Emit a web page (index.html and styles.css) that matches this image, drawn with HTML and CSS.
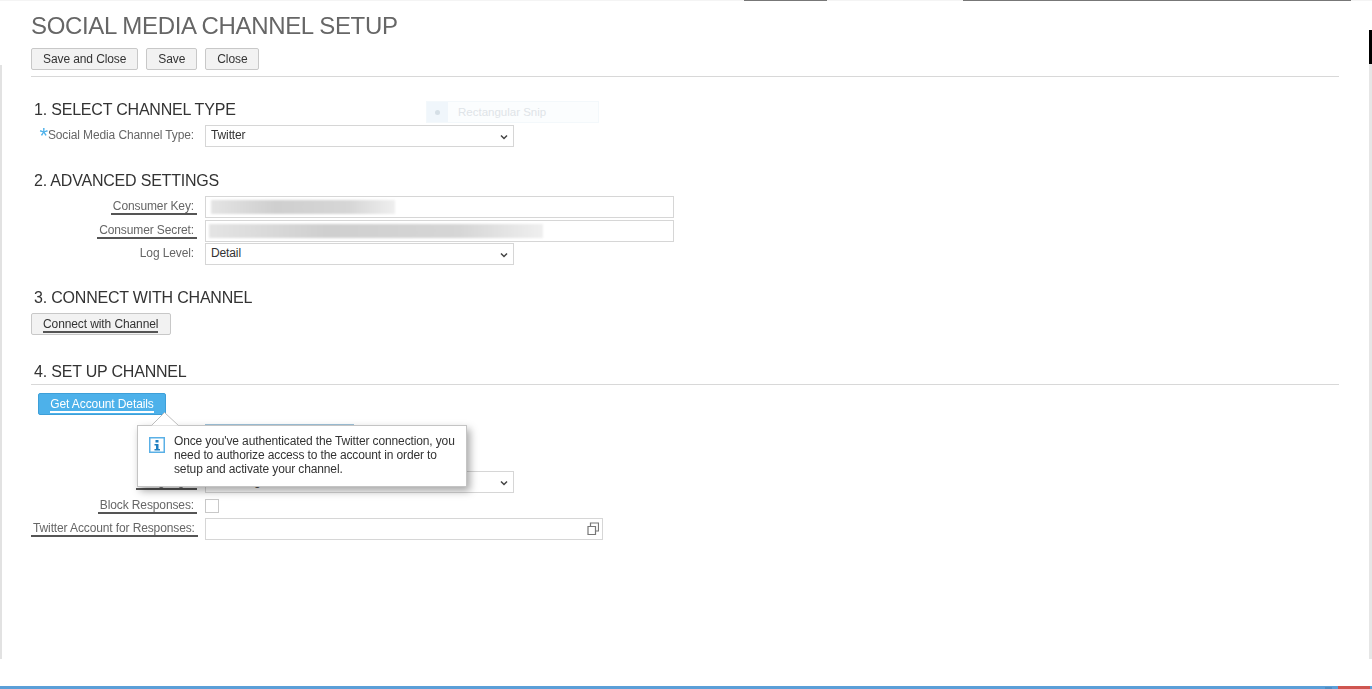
FILE: index.html
```html
<!DOCTYPE html>
<html lang="en">
<head>
<meta charset="utf-8">
<title>Social Media Channel Setup</title>
<link rel="stylesheet" href="styles.css">
</head>
<body>
<div class="topline"><span class="seg seg-a"></span><span class="seg seg-b"></span></div>
<div class="edge-left"></div>
<div class="edge-right"></div>
<div class="snip"><span class="snip-icon"><i></i></span><span class="snip-text">Rectangular Snip</span></div>
<main class="page">
  <h1 class="title">SOCIAL MEDIA CHANNEL SETUP</h1>
  <div class="toolbar">
    <button class="btn">Save and Close</button>
    <button class="btn">Save</button>
    <button class="btn">Close</button>
  </div>

  <section class="sec sec-1">
    <h2 class="heading">1. SELECT CHANNEL TYPE</h2>
    <div class="row">
      <label class="lbl"><span class="req">*</span>Social Media Channel Type:</label>
      <div class="select">Twitter<svg class="chev" viewBox="0 0 8 6"><path d="M1 1.500 4 4.500 7 1.500"/></svg></div>
    </div>
  </section>

  <section class="sec sec-2">
    <h2 class="heading">2. ADVANCED SETTINGS</h2>
    <div class="rows rows-2">
      <div class="row">
        <label class="lbl"><span class="ul ul-pad">Consumer Key:</span></label>
        <div class="input wide"><span class="smear smear-key"></span></div>
      </div>
      <div class="row">
        <label class="lbl"><span class="ul ul-pad">Consumer Secret:</span></label>
        <div class="input wide"><span class="smear smear-secret"></span></div>
      </div>
      <div class="row">
        <label class="lbl">Log Level:</label>
        <div class="select">Detail<svg class="chev" viewBox="0 0 8 6"><path d="M1 1.500 4 4.500 7 1.500"/></svg></div>
      </div>
    </div>
  </section>

  <section class="sec sec-3">
    <h2 class="heading">3. CONNECT WITH CHANNEL</h2>
    <button class="btn btn-connect"><span class="ul">Connect with Channel</span></button>
  </section>

  <section class="sec sec-4">
    <h2 class="heading heading-rule">4. SET UP CHANNEL</h2>
    <button class="btn btn-primary"><span class="ul ul-white">Get Account Details</span></button>
    <div class="rows rows-4">
      <div class="row row-peek">
        <label class="lbl"></label>
        <div class="input hidden-input"></div>
      </div>
      <div class="row">
        <label class="lbl"></label>
        <div class="input hidden-plain"></div>
      </div>
      <div class="row">
        <label class="lbl"><span class="ul ul-pad">Language:</span></label>
        <div class="select">Not Assigned<svg class="chev" viewBox="0 0 8 6"><path d="M1 1.500 4 4.500 7 1.500"/></svg></div>
      </div>
      <div class="row row-check">
        <label class="lbl"><span class="ul ul-pad">Block Responses:</span></label>
        <span class="check"></span>
      </div>
      <div class="row">
        <label class="lbl"><span class="ul ul-pad">Twitter Account for Responses:</span></label>
        <div class="input lookup">
          <svg class="lookup-icon" viewBox="0 0 12 13"><path d="M1 4.500h7.500v8h-7.500zM3.500 4.500v-3.500h8v8h-3"/></svg>
        </div>
      </div>
    </div>

    <div class="popover">
      <svg class="pop-arrow" viewBox="0 0 28 14"><path d="M.5 13.500 13.500 .5 27.500 13.500"/></svg>
      <svg class="info" viewBox="0 0 16 16"><rect x=".75" y=".75" width="14.500" height="14.500"/><path class="info-i" d="M6.500 3h3v2.500h-3zM5.500 7h4v5h1.500v1.500h-5.500v-1.500h1.500v-3.500h-1.500z"/></svg>
      <p class="pop-text">Once you've authenticated the Twitter connection, you need to authorize access to the account in order to setup and activate your channel.</p>
    </div>
  </section>
</main>
<div class="taskbar"><span class="task-bump"></span><span class="task-red"></span></div>
</body>
</html>
```
FILE: styles.css
```css
* { box-sizing: border-box; }
html, body { margin: 0; height: 100%; }
body {
  position: relative;
  height: 689px;
  overflow: hidden;
  background: #fff;
  font-family: "Liberation Sans", Arial, sans-serif;
  font-size: 12px;
  letter-spacing: -.12px;
  color: #333;
}
.page { padding: 0 33px 0 31px; filter: blur(.35px); }
.title {
  margin: 0;
  padding-top: 12px;
  height: 48px;
  font-size: 24px;
  letter-spacing: -.35px;
  line-height: 28px;
  font-weight: 400;
  color: #666;
}
.toolbar {
  display: flex;
  gap: 8px;
  height: 29px;
  border-bottom: 1px solid #d8d8d8;
}
.btn {
  height: 22px;
  padding: 0 11px;
  border: 1px solid #c8c8c8;
  border-radius: 2px;
  background: #f2f2f2;
  font: 12px/18px "Liberation Sans", Arial, sans-serif;
  letter-spacing: -.1px;
  color: #333;
}
.btn-connect { padding-right: 12px; }
.heading {
  margin: 0;
  padding-left: 3px;
  font-size: 16px;
  letter-spacing: -.2px;
  line-height: 18px;
  font-weight: 400;
  color: #333;
}
.sec-1 { height: 70px; padding-top: 24px; }
.sec-2 { height: 117px; padding-top: 25px; }
.sec-3 { height: 71px; padding-top: 25px; }
.sec-1 .heading, .sec-2 .heading, .sec-3 .heading { height: 24px; }
.sec-4 { position: relative; padding-top: 28px; }
.heading-rule { height: 22px; border-bottom: 1px solid #d8d8d8; margin-bottom: 8px; }
.rows { display: flex; flex-direction: column; gap: 1px; }
.rows-2 { gap: 1.500px; }
.rows-4 { margin-top: 9px; }
.row { display: flex; align-items: center; gap: 8px; height: 22px; }
.row-peek { height: 23px; align-items: flex-start; }
.row-check { margin-top: 1px; }
.lbl {
  flex: 0 0 166px;
  min-width: 0;
  text-align: right;
  color: #666;
  white-space: nowrap;
  padding: 0 3px 2px 0;
}
.req { color: #4db1ea; font-size: 22px; line-height: 0; vertical-align: -4px; }
.ul { display: inline-block; border-bottom: 2px solid #555; line-height: 13px; }
.ul-pad { padding: 0 3px 0 2px; margin: 0 -3px -2px 0; }
.ul-white { border-bottom-color: #fff; }
.select, .input {
  height: 22px;
  border: 1px solid #d6d6d6;
  background: #fff;
  position: relative;
}
.select {
  width: 309px;
  padding-left: 5px;
  line-height: 18px;
  color: #333;
}
.chev {
  position: absolute;
  right: 5px;
  top: 8px;
  width: 8px;
  height: 6px;
  fill: none;
  stroke: #444;
  stroke-width: 1.500;
}
.wide { width: 469px; overflow: hidden; }
.hidden-input { width: 149px; border-color: #9fc3da; }
.hidden-plain { width: 149px; }
.lookup { width: 398px; }
.lookup-icon {
  position: absolute;
  right: 3px;
  top: 3px;
  width: 12px;
  height: 13px;
  fill: none;
  stroke: #777;
  stroke-width: 1.200;
}
.smear {
  position: absolute;
  top: 3px;
  height: 14px;
  background: linear-gradient(90deg, #e4e4e4, #cfcfcf 35%, #d6d6d6 75%, #efefef);
  filter: blur(1px);
}
.smear-key { left: 5px; width: 184px; }
.smear-secret { left: 3px; width: 334px; }
.check {
  width: 14px;
  height: 14px;
  border: 1px solid #c8c8c8;
  background: #fff;
}
.btn-primary {
  display: block;
  margin-left: 7px;
  width: 128px;
  padding: 0;
  border-color: #3d9fd8;
  background: #4db1ea;
  color: #fff;
}
.popover {
  position: absolute;
  left: 106px;
  top: 90px;
  width: 330px;
  height: 62px;
  padding: 8px 4px 0 36px;
  background: #fff;
  border: 1px solid #c4c4c4;
  box-shadow: 3px 4px 8px rgba(0, 0, 0, .35);
}
.pop-arrow {
  position: absolute;
  left: 13px;
  top: -14px;
  width: 28px;
  height: 14px;
  fill: #fff;
  stroke: #bdbdbd;
}
.info {
  position: absolute;
  left: 11px;
  top: 11px;
  width: 16px;
  height: 16px;
}
.info rect { fill: #fff; stroke: #5ab0e6; stroke-width: 1.500; }
.info-i { fill: #1f7fc0; }
.pop-text {
  margin: 0;
  font-size: 12px;
  letter-spacing: -.13px;
  line-height: 14px;
  color: #333;
}
.snip {
  position: absolute;
  left: 426px;
  top: 101px;
  width: 173px;
  height: 22px;
  display: flex;
  align-items: center;
  background: #fbfdfe;
  border: 1px solid #f3f8fb;
  color: #dfe4e8;
  font-size: 11.500px;
  letter-spacing: 0;
}
.snip-icon {
  width: 21px;
  height: 100%;
  display: flex;
  align-items: center;
  justify-content: center;
  background: #f0f6fb;
  margin-right: 10px;
}
.snip-icon i { width: 5px; height: 5px; border-radius: 50%; background: #d5dfe6; }
.topline { position: absolute; inset: 0 0 auto 0; height: 1px; background: #f4f4f4; }
.seg { position: absolute; top: 0; height: 1px; background: #777; }
.seg-a { left: 744px; width: 83px; }
.seg-b { left: 963px; width: 388px; }
.edge-left { position: absolute; left: 0; top: 65px; width: 2px; height: 594px; background: #e2e2e2; }
.edge-right { position: absolute; right: 0; top: 30px; width: 3px; height: 629px; background: linear-gradient(#000 0, #000 34px, #e6e6e6 34px); }
.taskbar { position: absolute; left: 0; right: 0; bottom: 0; height: 3px; background: #5b9fd8; }
.task-bump { position: absolute; left: 1325px; bottom: 0; width: 7px; height: 2px; background: #4f8dc2; }
.task-red { position: absolute; left: 1338px; width: 32px; height: 3px; background: #cf5550; }
```
